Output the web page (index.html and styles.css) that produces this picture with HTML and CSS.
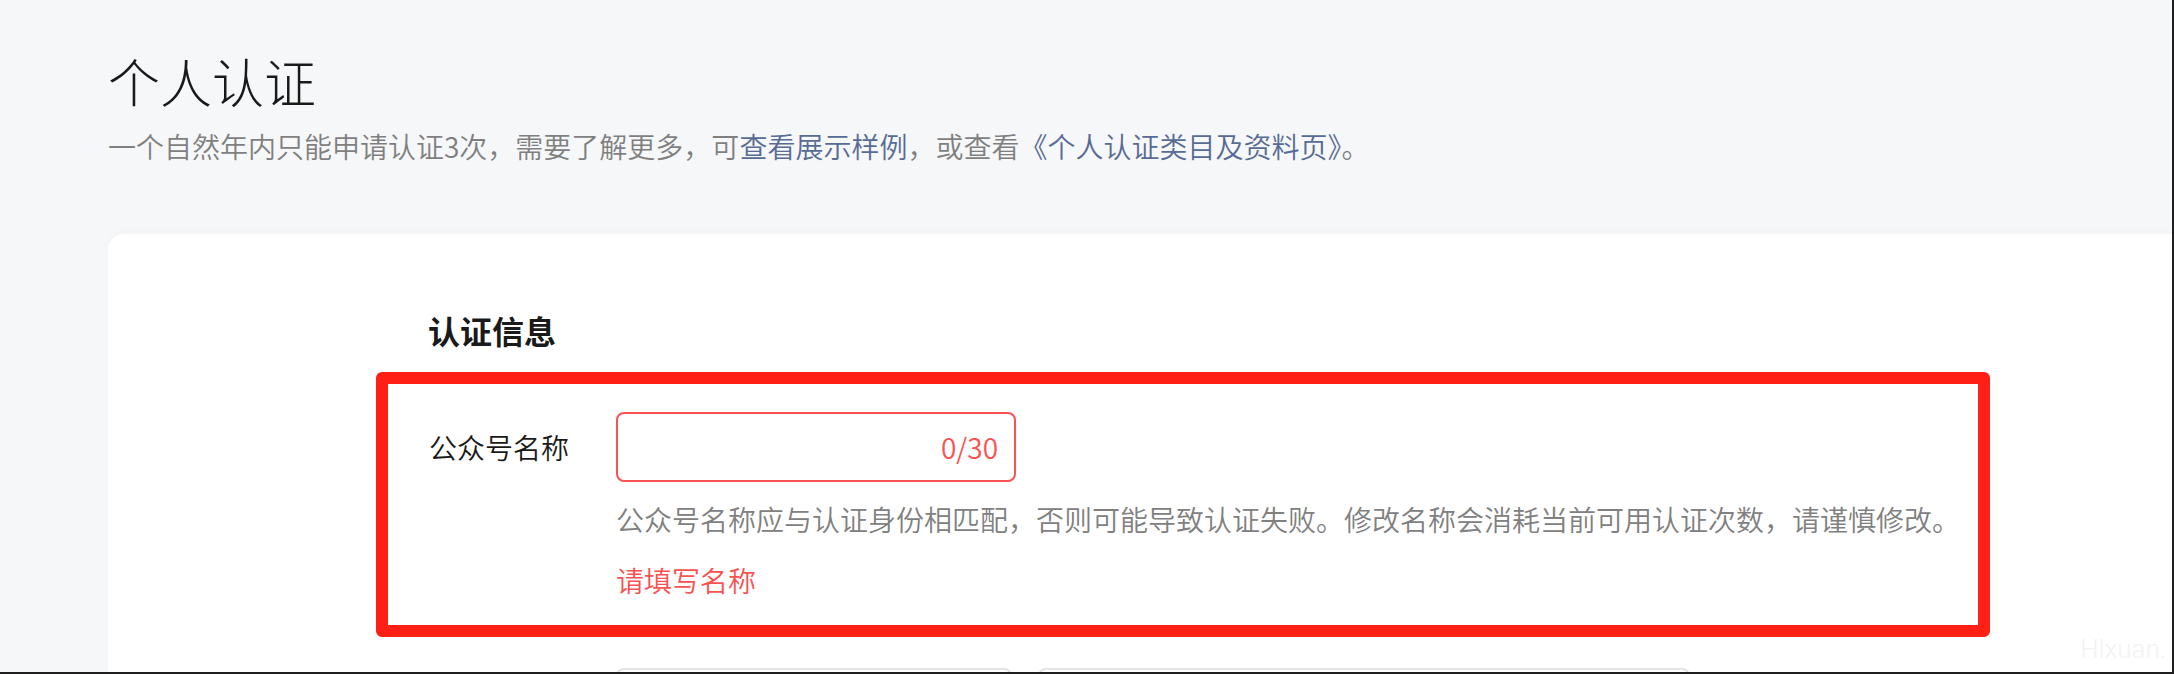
FILE: index.html
```html
<!DOCTYPE html>
<html lang="zh-CN">
<head>
<meta charset="utf-8">
<title>个人认证</title>
<link rel="stylesheet" href="styles.css">
</head>
<body>
<div class="frame">
  <header class="page-head">
    <h1 class="page-title">个人认证</h1>
    <p class="page-desc">一个自然年内只能申请认证3次，需要了解更多，可<a class="link" href="#">查看展示样例</a>，或查看<a class="link" href="#">《个人认证类目及资料页》</a>。</p>
  </header>
  <main class="card">
    <section class="form-section">
      <h2 class="section-title">认证信息</h2>
      <div class="form-item highlight">
        <label class="form-label">公众号名称</label>
        <div class="form-control">
          <div class="input is-error"><span class="input-count">0/30</span></div>
          <p class="form-tips">公众号名称应与认证身份相匹配，否则可能导致认证失败。修改名称会消耗当前可用认证次数，请谨慎修改。</p>
          <p class="form-error">请填写名称</p>
        </div>
      </div>
      <div class="form-item next-item">
        <div class="input input-short"></div>
        <div class="input input-long"></div>
      </div>
    </section>
  </main>
  <div class="watermark">Hlxuan.</div>
</div>
</body>
</html>
```

FILE: styles.css
```css
html, body {
  margin: 0;
  padding: 0;
  background: #f6f7f8;
}

body {
  font-family: "Noto Sans CJK SC", "Noto Sans", sans-serif;
  color: #1a1a1a;
}

.frame {
  position: relative;
  width: 2174px;
  height: 674px;
  box-sizing: border-box;
  border-right: 2px solid #1f1f1f;
  border-bottom: 2px solid #1f1f1f;
  overflow: hidden;
  background: #f6f7f8;
}

.page-head {
  padding: 45px 0 0 108px;
}

.page-title {
  margin: 0;
  font-size: 52px;
  line-height: 72px;
  font-weight: 300;
  color: #191919;
}

.page-desc {
  margin: 9px 0 0;
  font-size: 28px;
  line-height: 40px;
  font-weight: 350;
  color: #7f7f7f;
  white-space: nowrap;
}

.link {
  color: #576b95;
  text-decoration: none;
}

.card {
  display: block;
  margin: 68px 0 0 108px;
  height: 600px;
  background: #ffffff;
  border-radius: 16px 0 0 0;
  box-shadow: 0 -3px 10px rgba(0, 0, 0, 0.015);
  padding: 74px 0 0 268px;
}

.form-section {
  display: flex;
  flex-direction: column;
}

.section-title {
  margin: 0;
  padding-left: 52px;
  font-size: 32px;
  line-height: 44px;
  font-weight: 700;
  color: #1a1a1a;
}

.form-item {
  display: flex;
  align-items: flex-start;
}

.highlight {
  margin-top: 20px;
  width: 1614px;
  box-sizing: border-box;
  border: 12px solid #ff1f14;
  border-radius: 6px;
  padding: 28px 0 25px 41px;
}

.form-label {
  width: 187px;
  flex: none;
  font-size: 28px;
  line-height: 70px;
  font-weight: 350;
  color: #1a1a1a;
}

.form-control {
  display: flex;
  flex-direction: column;
}

.input {
  box-sizing: border-box;
  height: 70px;
  border: 2px solid #e3e3e3;
  border-radius: 8px;
  background: #ffffff;
}

.is-error {
  width: 400px;
  border-color: #fa5151;
  display: flex;
  align-items: center;
  justify-content: flex-end;
  padding-right: 16px;
}

.input-count {
  font-size: 28px;
  line-height: 40px;
  font-weight: 350;
  color: #fa5151;
}

.form-tips {
  margin: 17px 0 0;
  font-size: 28px;
  line-height: 40px;
  font-weight: 350;
  color: #808080;
  white-space: nowrap;
}

.form-error {
  margin: 21px 0 0;
  font-size: 28px;
  line-height: 40px;
  font-weight: 350;
  color: #fa5151;
}

.next-item {
  margin-top: 31px;
  padding-left: 240px;
  gap: 26px;
}

.input-short {
  width: 396px;
}

.input-long {
  width: 652px;
}

.watermark {
  position: absolute;
  right: 6px;
  top: 636px;
  font-family: Roboto, "Liberation Sans", sans-serif;
  font-weight: 300;
  font-size: 26px;
  line-height: 26px;
  color: #f3f3f3;
}
```
